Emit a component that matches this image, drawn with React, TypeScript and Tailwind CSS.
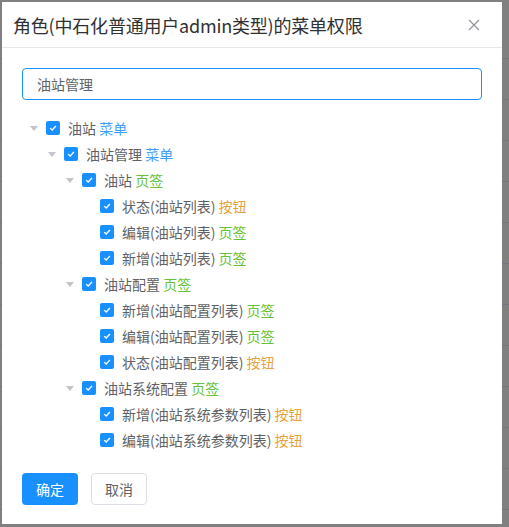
import React from "react";

type Node = { label: string; tag: "菜单" | "页签" | "按钮"; level: number; caret: boolean };

const nodes: Node[] = [
  { label: "油站", tag: "菜单", level: 0, caret: true },
  { label: "油站管理", tag: "菜单", level: 1, caret: true },
  { label: "油站", tag: "页签", level: 2, caret: true },
  { label: "状态(油站列表)", tag: "按钮", level: 3, caret: false },
  { label: "编辑(油站列表)", tag: "页签", level: 3, caret: false },
  { label: "新增(油站列表)", tag: "页签", level: 3, caret: false },
  { label: "油站配置", tag: "页签", level: 2, caret: true },
  { label: "新增(油站配置列表)", tag: "页签", level: 3, caret: false },
  { label: "编辑(油站配置列表)", tag: "页签", level: 3, caret: false },
  { label: "状态(油站配置列表)", tag: "按钮", level: 3, caret: false },
  { label: "油站系统配置", tag: "页签", level: 2, caret: true },
  { label: "新增(油站系统参数列表)", tag: "按钮", level: 3, caret: false },
  { label: "编辑(油站系统参数列表)", tag: "按钮", level: 3, caret: false },
];

const tagClass: Record<string, string> = {
  菜单: "text-[#409eff]",
  页签: "text-[#67c23a]",
  按钮: "text-[#e6a23c]",
};

const indent = ["pl-0", "pl-[18px]", "pl-[36px]", "pl-[54px]"];

function Check() {
  return (
    <span className="w-[14px] h-[14px] rounded-[2px] bg-[#1890ff] flex items-center justify-center shrink-0">
      <svg width="10" height="10" viewBox="0 0 10 10">
        <path d="M2.2 5.1 L4.2 7 L7.9 3" fill="none" stroke="#fff" strokeWidth="1.3" />
      </svg>
    </span>
  );
}

function Caret({ show }: { show: boolean }) {
  return (
    <span className="w-[24px] h-[26px] flex items-center justify-center shrink-0">
      {show && (
        <svg width="8" height="5" viewBox="0 0 8 5">
          <path d="M0 0 L8 0 L4 5 Z" fill="#c0c4cc" />
        </svg>
      )}
    </span>
  );
}

export default function App() {
  return (
    <div
      className="relative w-[509px] h-[527px] bg-[#808080] overflow-hidden p-[2px] pr-[7px] pb-[3px]"
      style={{ fontFamily: '"Noto Sans CJK SC", "Noto Sans", sans-serif' }}
    >
      <div className="absolute inset-0 flex flex-col pt-[18px]">
        {Array.from({ length: 13 }).map((_, i) => (
          <div key={i} className="h-[41px] border-b border-[#747580] shrink-0" />
        ))}
      </div>
      <div className="relative w-[500px] h-[522px] bg-white flex flex-col">
        <div className="h-[46px] border-b border-[#e8e8e8] flex items-center justify-between pl-[11px] pr-[22px] shrink-0">
          <span className="text-[18px] text-[#303133] leading-none tracking-[-0.2px]">
            角色(中石化普通用户admin类型)的菜单权限
          </span>
          <svg width="12" height="12" viewBox="0 0 12 12">
            <path d="M1 1 L11 11 M11 1 L1 11" stroke="#909399" strokeWidth="1.2" />
          </svg>
        </div>
        <div className="px-5 pt-[20px] flex flex-col">
          <div className="h-[32px] border border-[#1890ff] rounded-[4px] flex items-center px-[14px] text-[14px] text-[#606266]">
            油站管理
          </div>
          <div className="mt-[15px] flex flex-col">
            {nodes.map((n, i) => (
              <div key={i} className={`h-[26px] flex items-center ${indent[n.level]}`}>
                <Caret show={n.caret} />
                <Check />
                <span className="ml-[8px] text-[14px] text-[#606266] whitespace-nowrap">
                  {n.label} <span className={tagClass[n.tag]}>{n.tag}</span>
                </span>
              </div>
            ))}
          </div>
          <div className="mt-[20px] flex gap-[13px]">
            <button className="w-[56px] h-[32px] rounded-[4px] bg-[#1890ff] text-white text-[14px]">确定</button>
            <button className="w-[56px] h-[32px] rounded-[4px] border border-[#dcdfe6] bg-white text-[#606266] text-[14px]">
              取消
            </button>
          </div>
        </div>
      </div>
    </div>
  );
}
